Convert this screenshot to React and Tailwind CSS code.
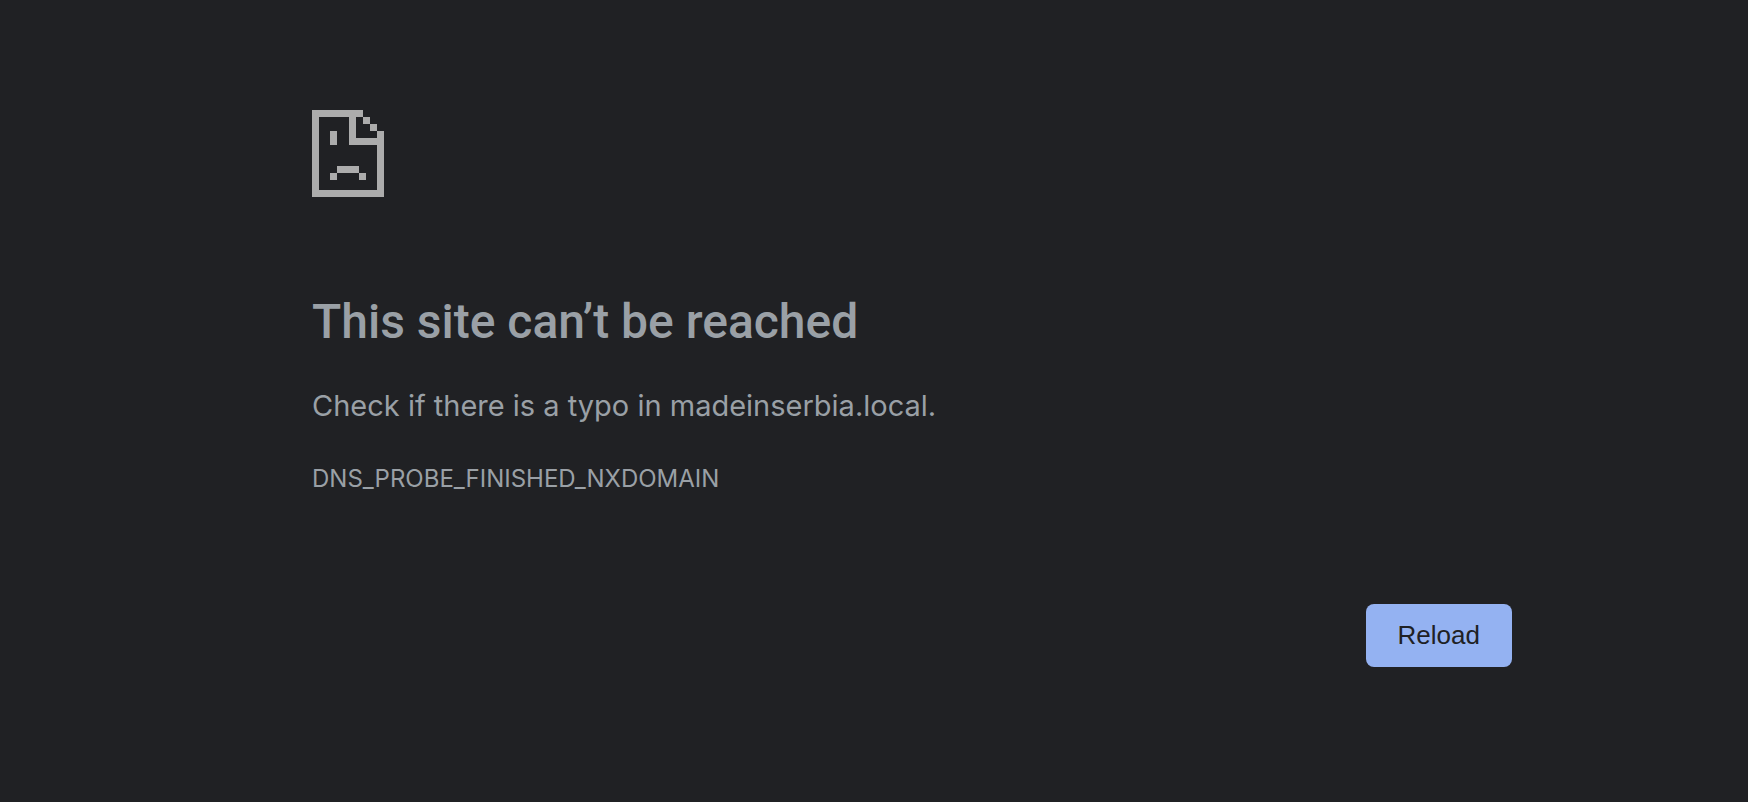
import React from 'react';

const SadPageIcon = () => (
  <svg width="72" height="87" viewBox="0 0 72 87" fill="#acacac" shapeRendering="crispEdges" aria-hidden="true">
    {/* page outline */}
    <path d="M0 0H51V7H44V28H65V21H72V87H0ZM7 7V80H65V35H37V7Z" fillRule="evenodd" />
    <path d="M51 7h7v7h-7zM58 14h7v7h-7z" />
    {/* face */}
    <path d="M18 21h7v14h-7zM25 56h22v7h-22zM18 63h7v7h-7zM47 63h7v7h-7z" />
  </svg>
);

const App = () => {
  const handleReload = () => window.location.reload();

  return (
    <div className="min-h-screen bg-[#202124] font-['Inter',sans-serif] text-[#9aa0a6]">
      <main className="mx-auto max-w-[1276px] pl-[76px] pt-[110px] pb-16">
        <SadPageIcon />
        <h1 className="mt-24 font-['Roboto',sans-serif] text-5xl leading-[58px] font-medium">This site can’t be reached</h1>
        <p className="mt-[37px] text-[29px] leading-9">Check if there is a typo in madeinserbia.local.</p>
        <div className="mt-[37px] text-2xl leading-9">DNS_PROBE_FINISHED_NXDOMAIN</div>
        <div className="mt-[107px] flex justify-end">
          <button
            type="button"
            onClick={handleReload}
            className="cursor-pointer rounded-lg bg-[#94b2f2] px-8 py-3 font-['Liberation_Sans',sans-serif] text-[26px] leading-[39px] text-[#202124]"
          >
            Reload
          </button>
        </div>
      </main>
    </div>
  );
};

export default App;
